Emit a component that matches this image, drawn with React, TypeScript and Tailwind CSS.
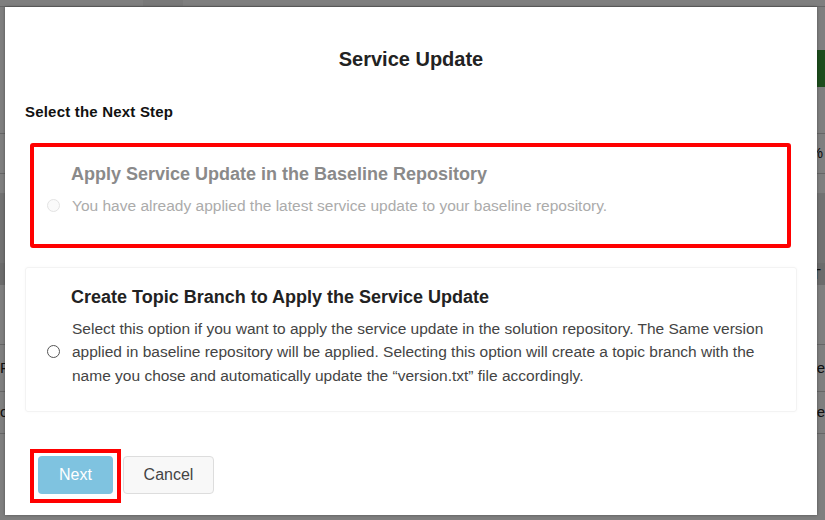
import React from 'react'

const font = "font-['Liberation_Sans',Arial,sans-serif]"

function Radio({ disabled }: { disabled?: boolean }) {
  return (
    <span
      className={
        disabled
          ? 'block h-[13px] w-[13px] shrink-0 rounded-full border border-[#e3e3e3] bg-[#fafafa]'
          : 'block h-[13px] w-[13px] shrink-0 rounded-full border border-[#555] bg-white'
      }
    />
  )
}

function Backdrop() {
  return (
    <div className="flex h-full w-full flex-col bg-white text-[15px] text-[#222]">
      <div className="flex h-[7px] border-b border-[#ccc]">
        <div className="w-[143px]" />
        <div className="w-[40px] bg-[#f2f2f2]" />
      </div>
      <div className="flex h-[126px] items-start justify-end">
        <div className="mt-[43px] h-[37px] w-[30px] bg-[#3a9a3a] pl-1 pt-2 text-white">E</div>
      </div>
      <div className="flex h-[40px] items-center justify-end border-t border-[#ccc] pr-0.5">%</div>
      <div className="h-[20px] border-t border-[#ccc]" />
      <div className="h-[70px] bg-[#e4e4e4]" />
      <div className="flex h-[22px] items-center justify-end bg-[#d9d9d9] pr-1">T</div>
      <div className="h-[60px] border-b border-[#ccc]" />
      <div className="flex h-[47px] items-center justify-between border-b border-[#ccc]">
        <span>R</span>
        <span>re</span>
      </div>
      <div className="flex h-[42px] items-center justify-between border-b border-[#ccc]">
        <span>o</span>
        <span>re</span>
      </div>
      <div className="flex-1" />
    </div>
  )
}

export default function App() {
  return (
    <div className={`relative h-[520px] w-[825px] overflow-hidden ${font}`}>
      <Backdrop />
      <div className="absolute inset-0 bg-black/50" />

      <div className="absolute left-[5px] top-[7px] flex h-[508px] w-[812px] flex-col bg-white px-5 shadow-[0_0_3px_rgba(0,0,0,0.35)]">
        <h2 className="mt-[40px] text-center text-[20px] font-bold leading-[24px] text-[#222]">Service Update</h2>

        <p className="mt-[32px] text-[15px] font-bold leading-[18px] tracking-[0.2px] text-[#111]">
          Select the Next Step
        </p>

        {/* disabled option */}
        <div className="relative mt-[23px] rounded-[3px] pb-[25px] pl-[46px] pr-5 pt-[19px]">
          <h3 className="text-[18px] font-bold leading-[22px] text-[#8a8a8a]">
            Apply Service Update in the Baseline Repository
          </h3>
          <div className="-ml-[24px] mt-[9px] flex items-center gap-[12px]">
            <Radio disabled />
            <p className="text-[15.5px] leading-[23.5px] text-[#ababab]">
              You have already applied the latest service update to your baseline repository.
            </p>
          </div>
          <div className="pointer-events-none absolute -top-px bottom-[-5px] left-[5px] right-[6px] rounded-[3px] border-4 border-[#ff0000]" />
        </div>

        {/* enabled option */}
        <div className="mt-[24px] rounded-[3px] border border-[#f3f3f3] pb-[24px] pl-[45px] pr-5 pt-[18px] shadow-[0_0_3px_rgba(0,0,0,0.03)]">
          <h3 className="text-[18px] font-bold leading-[22px] text-[#222]">
            Create Topic Branch to Apply the Service Update
          </h3>
          <div className="-ml-[24px] mt-[9px] flex items-center gap-[12px]">
            <Radio />
            <p className="text-[15.5px] leading-[23.5px] text-[#444]">
              Select this option if you want to apply the service update in the solution repository. The Same version
              applied in baseline repository will be applied. Selecting this option will create a topic branch with the
              name you chose and automatically update the “version.txt” file accordingly.
            </p>
          </div>
        </div>

        <div className="mt-[44px] flex items-center gap-[10px] pl-[13px]">
          <div className="relative">
            <button className="h-[38px] w-[75px] rounded-[4px] bg-[#7fc3e0] text-[16px] text-white">Next</button>
            <div className="pointer-events-none absolute -bottom-[9px] -left-[8px] -right-[8px] -top-[7px] border-4 border-[#ff0000]" />
          </div>
          <button className="h-[38px] w-[91px] rounded-[4px] border border-[#ddd] bg-[#f8f8f8] text-[16px] text-[#444]">
            Cancel
          </button>
        </div>
      </div>
    </div>
  )
}
